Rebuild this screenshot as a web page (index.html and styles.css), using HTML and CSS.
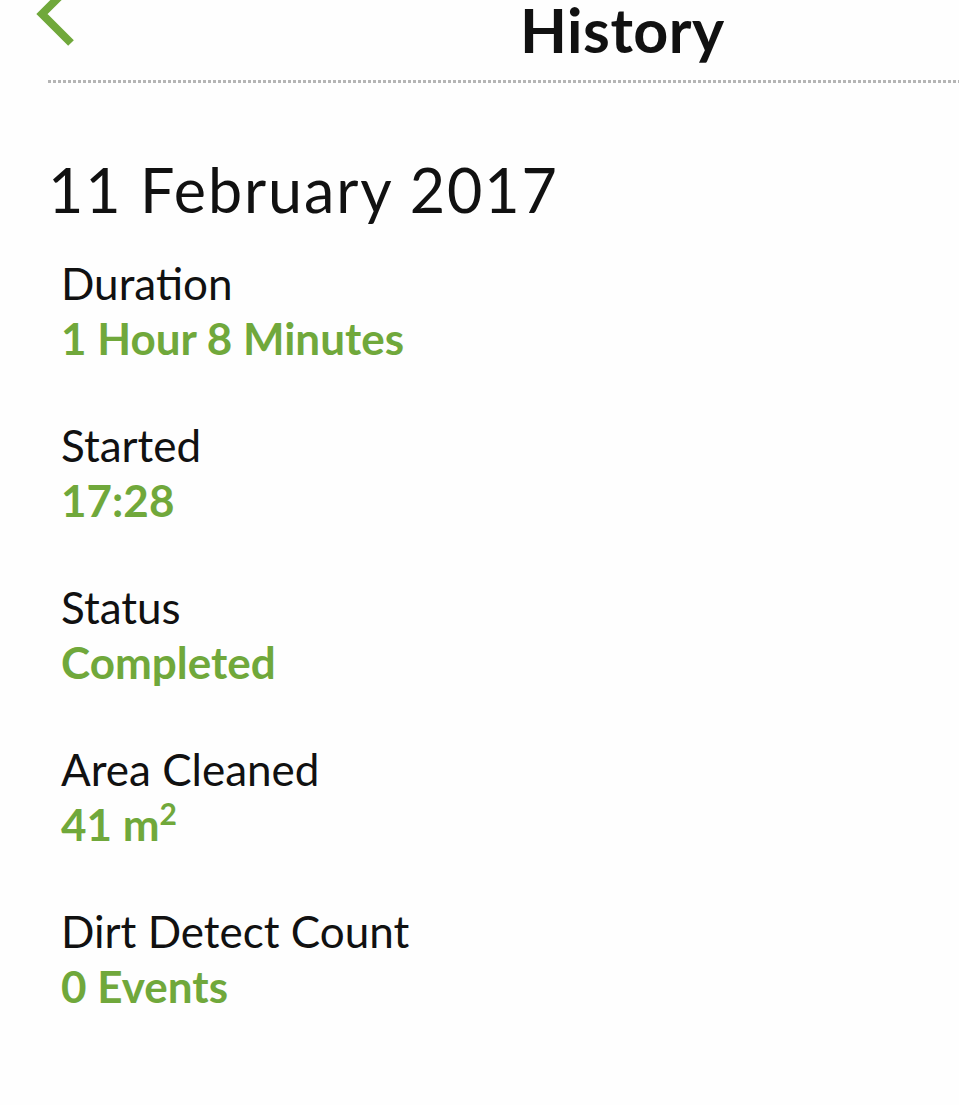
FILE: index.html
```html
<!DOCTYPE html>
<html lang="en">
<head>
<meta charset="utf-8">
<title>History</title>
<link rel="stylesheet" href="styles.css">
</head>
<body>
<header class="topbar">
  <svg class="back" width="80" height="60" viewBox="0 0 80 60" aria-hidden="true">
    <polyline points="71,-15 42,14 71,43" fill="none" stroke="#70a83b" stroke-width="8" stroke-linejoin="miter"/>
  </svg>
  <h1 class="title">History</h1>
</header>
<div class="dots"></div>
<main class="content">
  <h2 class="date">11 February 2017</h2>
  <dl class="details">
    <div class="item"><dt>Duration</dt><dd>1 Hour 8 Minutes</dd></div>
    <div class="item"><dt>Started</dt><dd>17:28</dd></div>
    <div class="item"><dt>Status</dt><dd>Completed</dd></div>
    <div class="item"><dt>Area Cleaned</dt><dd>41 m<sup>2</sup></dd></div>
    <div class="item"><dt>Dirt Detect Count</dt><dd>0 Events</dd></div>
  </dl>
</main>
</body>
</html>
```
FILE: styles.css
```css
html, body {
  margin: 0;
  padding: 0;
  background: #fefefe;
}
body {
  font-family: Lato, "Noto Sans", sans-serif;
  color: #111;
  width: 959px;
  overflow: hidden;
}
.topbar {
  display: flex;
  align-items: flex-start;
  height: 80px;
}
.back {
  overflow: visible;
  flex: none;
}
.title {
  margin: 0 0 0 440px;
  padding-top: 0;
  font-size: 61px;
  line-height: 60px;
  font-weight: 700;
  letter-spacing: 0.5px;
  color: #111;
}
.dots {
  margin-left: 48px;
  height: 3px;
  background: repeating-linear-gradient(to right, #b5b5b5 0 3px, transparent 3px 5px);
}
.content {
  padding-left: 48px;
}
.date {
  margin: 71px 0 0 0;
  font-size: 61px;
  line-height: 72px;
  font-weight: 400;
  letter-spacing: 1.9px;
  color: #111;
}
.details {
  margin: 30px 0 0 0;
  padding-left: 13px;
  display: flex;
  flex-direction: column;
  gap: 53px;
}
.item dt {
  font-size: 44px;
  line-height: 55px;
  font-weight: 400;
  color: #111;
}
.item dd {
  margin: 0;
  font-size: 44px;
  line-height: 54px;
  font-weight: 700;
  color: #70a83b;
}
.item sup {
  font-size: 30px;
  line-height: 0;
  vertical-align: 16px;
}
```
